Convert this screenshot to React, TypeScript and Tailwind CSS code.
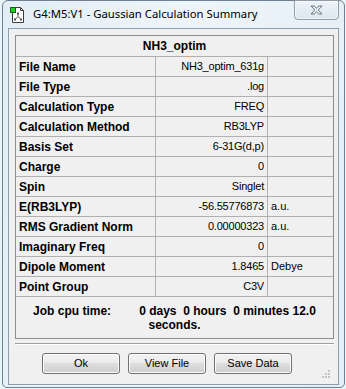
const rows: [string, string, string][] = [
  ['File Name', 'NH3_optim_631g', ''],
  ['File Type', '.log', ''],
  ['Calculation Type', 'FREQ', ''],
  ['Calculation Method', 'RB3LYP', ''],
  ['Basis Set', '6-31G(d,p)', ''],
  ['Charge', '0', ''],
  ['Spin', 'Singlet', ''],
  ['E(RB3LYP)', '-56.55776873', 'a.u.'],
  ['RMS Gradient Norm', '0.00000323', 'a.u.'],
  ['Imaginary Freq', '0', ''],
  ['Dipole Moment', '1.8465', 'Debye'],
  ['Point Group', 'C3V', ''],
]

function DocIcon() {
  return (
    <svg width="16" height="16" viewBox="0 0 16 16">
      <path d="M2.5 0.5h8l3 3v12h-11z" fill="#fff" stroke="#3a3a3a" />
      <path d="M10.5 0.5v3h3" fill="none" stroke="#3a3a3a" />
      <rect x="0.5" y="0.5" width="5" height="5" fill="#19d219" stroke="#1b5e1b" />
      <path d="M8 6.5v3M8 9.5l-3 3M8 9.5l3 3" stroke="#555" strokeWidth="1" />
      <rect x="7" y="5.5" width="2" height="2" fill="#555" />
      <rect x="4" y="11.5" width="2" height="2" fill="#555" />
      <rect x="10" y="11.5" width="2" height="2" fill="#555" />
    </svg>
  )
}

function CloseGlyph() {
  return (
    <svg width="13" height="10" viewBox="0 0 13 10">
      <path
        d="M1 1h3.2l2.3 2.2l2.3-2.2h3.2l-3.8 4l3.8 4h-3.2l-2.3-2.2l-2.3 2.2h-3.2l3.8-4z"
        fill="#e8eef3"
        stroke="#6b7785"
        strokeWidth="1"
        strokeLinejoin="round"
      />
    </svg>
  )
}

function Button({ label }: { label: string }) {
  return (
    <button
      type="button"
      className="h-[21px] w-[78px] rounded-[3px] border border-[#707070] bg-[linear-gradient(#f2f2f2_0%,#ebebeb_50%,#dddddd_50%,#cfcfcf_100%)] text-[11px] leading-none text-black shadow-[inset_0_0_0_1px_#fcfcfc]"
    >
      {label}
    </button>
  )
}

export default function App() {
  return (
    <div className="h-[389px] w-[346px] overflow-hidden bg-[#e8f5f8] font-['Liberation_Sans',Arial,sans-serif]">
      <div className="relative ml-[2px] flex h-[388px] w-[343px] flex-col rounded-t-[6px] rounded-b-[5px] border border-[#6f8193] bg-[linear-gradient(100deg,#e2edf5_0%,#eef5fa_45%,#e4eef6_100%)]">
        {/* title bar */}
        <div className="flex h-[27px] shrink-0 items-center pl-[7px]">
          <DocIcon />
          <span className="ml-[7px] font-['Noto_Sans',sans-serif] text-[11.3px] text-black">
            G4:M5:V1 - Gaussian Calculation Summary
          </span>
        </div>
        <div className="absolute right-[5px] top-[-1px] flex h-[20px] w-[45px] items-center justify-center rounded-b-[4px] border border-[#8d9baa] bg-[linear-gradient(#eef4f8,#dbe6ee)] shadow-[inset_0_0_0_1px_rgba(255,255,255,0.6)]">
          <CloseGlyph />
        </div>

        {/* client area */}
        <div className="relative mx-[5px] flex h-[357px] flex-col border border-[#8f9eab] bg-[#f0f0f0] pl-[6px] pt-[6px]">
          <div className="w-[319px] border border-[#8c8c8c] bg-[#f0f0f0] text-black">
            <div className="flex h-[21px] items-center justify-center border-b border-[#b0b0b0] text-[12px] font-bold">
              NH3_optim
            </div>
            {rows.map(([label, value, unit]) => (
              <div key={label} className="flex h-[20px] border-b border-[#b0b0b0]">
                <div className="flex w-[140px] items-center border-r border-[#b0b0b0] pl-[3px] text-[12px] font-bold">
                  {label}
                </div>
                <div className="flex w-[112px] items-center justify-end border-r border-[#b0b0b0] pr-[3px] text-[11px] tracking-[-0.2px]">
                  {value}
                </div>
                <div className="flex flex-1 items-center pl-[3px] text-[11px]">{unit}</div>
              </div>
            ))}
            <div className="flex h-[41px] flex-col items-center justify-center text-[12px] font-bold leading-[14px]">
              <div className="flex gap-[28px] whitespace-pre">
                <span>Job cpu time:</span>
                <span>0 days  0 hours  0 minutes 12.0</span>
              </div>
              <div>seconds.</div>
            </div>
          </div>

          <div className="mt-[4px] w-[319px] border-t border-b border-t-[#a0a0a0] border-b-white" />

          <div className="mt-[8px] flex gap-[8px] pl-[27px]">
            <Button label="Ok" />
            <Button label="View File" />
            <Button label="Save Data" />
          </div>

          <svg className="absolute bottom-[5px] right-[7px]" width="10" height="10" viewBox="0 0 10 10">
            <rect x="7" y="1" width="2" height="2" fill="#c4c4c4" />
            <rect x="4" y="4" width="2" height="2" fill="#c4c4c4" />
            <rect x="7" y="4" width="2" height="2" fill="#c4c4c4" />
            <rect x="1" y="7" width="2" height="2" fill="#c4c4c4" />
            <rect x="4" y="7" width="2" height="2" fill="#c4c4c4" />
            <rect x="7" y="7" width="2" height="2" fill="#c4c4c4" />
          </svg>
        </div>
      </div>
    </div>
  )
}
